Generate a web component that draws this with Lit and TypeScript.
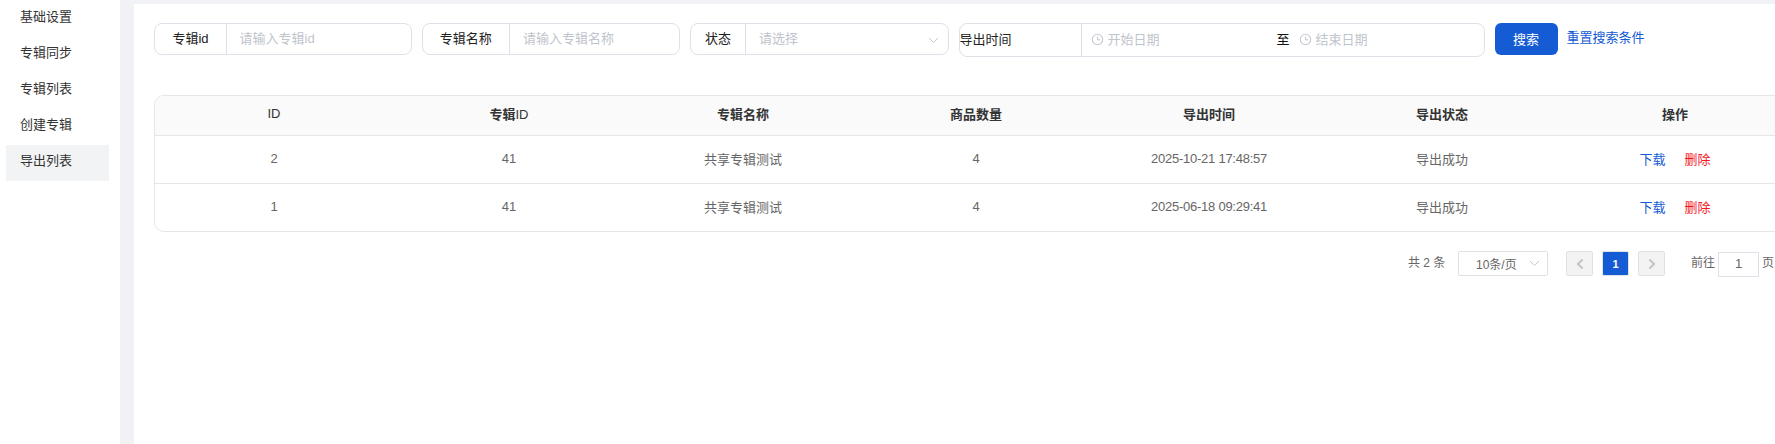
import { LitElement, html, css, svg } from "lit";
import { customElement } from "lit/decorators.js";

const clock = svg`<svg class="clock" width="13" height="13" viewBox="0 0 13 13" fill="none" stroke="#c8cbd6" stroke-width="1.1"><circle cx="6.5" cy="6.5" r="5.2"/><path d="M6.5 3.4V6.8H9.3"/></svg>`;
const chevDown = svg`<svg width="11" height="7" viewBox="0 0 11 7" fill="none" stroke="#c6c9d0" stroke-width="1"><path d="M1 1l4.5 4.5L10 1"/></svg>`;
const chevLeft = svg`<svg width="8" height="12" viewBox="0 0 8 12" fill="none" stroke="#c0c4cc" stroke-width="2"><path d="M6.5 1.5L2 6l4.5 4.5"/></svg>`;
const chevRight = svg`<svg width="8" height="12" viewBox="0 0 8 12" fill="none" stroke="#c0c4cc" stroke-width="2"><path d="M1.5 1.5L6 6l-4.5 4.5"/></svg>`;

const menu = ["基础设置", "专辑同步", "专辑列表", "创建专辑", "导出列表"];
const rows = [
  { id: "2", aid: "41", name: "共享专辑测试", n: "4", t: "2025-10-21 17:48:57", s: "导出成功" },
  { id: "1", aid: "41", name: "共享专辑测试", n: "4", t: "2025-06-18 09:29:41", s: "导出成功" },
];

@customElement("app-root")
export class AppRoot extends LitElement {
  static styles = css`
    :host {
      display: flex;
      width: 1775px;
      height: 444px;
      overflow: hidden;
      background: #f0f2f5;
      font-family: "Liberation Sans", "Noto Sans CJK SC", sans-serif;
      font-size: 13px;
      color: #333;
    }
    .side {
      flex: none;
      width: 120px;
      background: #fff;
      padding: 1px 11px 0 6px;
      box-sizing: border-box;
    }
    .item {
      height: 36px;
      line-height: 32px;
      padding-left: 14px;
    }
    .item.on { background: #f2f3f5; }
    .main {
      flex: none;
      width: 1641px;
      margin: 4px 0 0 14px;
      padding: 19px 0 0 20px;
      box-sizing: border-box;
      background: #fff;
    }
    .search {
      display: flex;
      align-items: flex-start;
      gap: 10px;
      height: 33.5px;
    }
    .box {
      display: flex;
      height: 32px;
      box-sizing: border-box;
      border: 1px solid #e0e1e8;
      border-radius: 8px;
      align-items: center;
      flex: none;
    }
    .b1 { width: 258px; }
    .b2 { width: 258px; }
    .b3 { width: 258.5px; }
    .b4 { width: 526px; height: 33.5px; }
    .lab {
      flex: none;
      height: 100%;
      display: flex;
      align-items: center;
      justify-content: center;
      border-right: 1px solid #e0e1e8;
      color: #222;
      box-sizing: border-box;
      padding-bottom: 3px;
    }
    .b1 .lab { width: 72px; }
    .b2 .lab { width: 86.5px; }
    .b3 .lab { width: 55px; }
    .b4 .lab { width: 122px; justify-content: flex-start; padding-bottom: 2px; }
    .ph { color: #c0c4cc; }
    .b1 .ph { padding: 0 0 3px 12.5px; }
    .b2 .ph { padding: 0 0 3px 13.5px; }
    .b3 .ph { padding: 0 0 3px 13px; }
    .b3 .sel { flex: 1; display: flex; align-items: center; justify-content: space-between; padding-right: 9px; }
    .b3 svg { margin-top: 3px; }
    .date { display: flex; align-items: center; gap: 4px; }
    .clock { flex: none; }
    .d1 { margin-left: 9px; width: 186px; }
    .to { color: #111; width: 22px; padding-bottom: 2px; }
    .date .ph { padding-bottom: 2px; }
    .btn {
      flex: none;
      width: 63px;
      height: 32px;
      border-radius: 6px;
      background: #155bd4;
      color: #fff;
      display: flex;
      align-items: center;
      justify-content: center;
      padding-bottom: 2px;
      box-sizing: border-box;
    }
    .link {
      color: #155bd4;
      line-height: 30px;
      flex: none;
      margin-left: -1px;
    }
    .table {
      width: 1650px;
      margin-top: 38.5px;
      border: 1px solid #e5e6ea;
      border-radius: 10px;
      box-sizing: border-box;
      overflow: hidden;
    }
    .tr {
      display: grid;
      grid-template-columns: 238px 232px 236px 230px 236px 230px 236px 1fr;
      align-items: center;
      text-align: center;
      height: 45px;
      padding-bottom: 2px;
      color: #666;
      border-top: 1px solid #e5e6ea;
      box-sizing: content-box;
    }
    .tr.head {
      height: 35px;
      padding-bottom: 4px;
      border-top: 0;
      background: #fafafa;
      color: #333;
      font-weight: 600;
    }
    .tr.head .lat { font-weight: 400; }
    .time { letter-spacing: -0.24px; }
    .ops { display: flex; justify-content: center; gap: 19px; }
    .dl { color: #155bd4; }
    .del { color: #f5141e; }
    .pager {
      display: flex;
      align-items: flex-start;
      margin: 19px 0 0 1254px;
      font-size: 12px;
      color: #666;
      white-space: nowrap;
    }
    .total { width: 50px; line-height: 25px; flex: none; }
    .size {
      flex: none;
      width: 90px;
      height: 25px;
      box-sizing: border-box;
      border: 1px solid #e0e1e8;
      border-radius: 2px;
      display: flex;
      align-items: center;
      padding: 0 7px 0 17px;
      justify-content: space-between;
    }
    .pg {
      flex: none;
      width: 27px;
      height: 25px;
      box-sizing: border-box;
      border: 1px solid #e0e1e8;
      border-radius: 2px;
      background: #f3f3f4;
      display: flex;
      align-items: center;
      justify-content: center;
      margin-left: 9px;
    }
    .pg.first { margin-left: 18px; }
    .pg.on {
      background: #155bd4;
      color: #fff;
      font-weight: 700;
      font-size: 11px;
    }
    .goto { line-height: 25px; margin-left: 26px; flex: none; }
    .num {
      flex: none;
      width: 41px;
      height: 25px;
      box-sizing: border-box;
      border: 1px solid #e0e1e8;
      margin: 1px 3px 0 3px;
      text-align: center;
      font-size: 13px;
      line-height: 21px;
    }
    .unit { line-height: 25px; flex: none; }
  `;

  render() {
    return html`
      <nav class="side">
        ${menu.map((m, i) => html`<div class="item ${i === 4 ? "on" : ""}">${m}</div>`)}
      </nav>
      <main class="main">
        <div class="search">
          <div class="box b1"><span class="lab">专辑id</span><span class="ph">请输入专辑id</span></div>
          <div class="box b2"><span class="lab">专辑名称</span><span class="ph">请输入专辑名称</span></div>
          <div class="box b3"><span class="lab">状态</span><span class="sel"><span class="ph">请选择</span>${chevDown}</span></div>
          <div class="box b4">
            <span class="lab">导出时间</span>
            <span class="date d1">${clock}<span class="ph">开始日期</span></span>
            <span class="to">至</span>
            <span class="date">${clock}<span class="ph">结束日期</span></span>
          </div>
          <div class="btn">搜索</div>
          <span class="link">重置搜索条件</span>
        </div>
        <div class="table">
          <div class="tr head">
            <span class="lat">ID</span><span>专辑<span class="lat">ID</span></span><span>专辑名称</span><span>商品数量</span><span>导出时间</span><span>导出状态</span><span>操作</span>
          </div>
          ${rows.map(
            (r) => html`<div class="tr">
              <span>${r.id}</span><span>${r.aid}</span><span>${r.name}</span><span>${r.n}</span><span class="time">${r.t}</span><span>${r.s}</span>
              <span class="ops"><span class="dl">下载</span><span class="del">删除</span></span>
            </div>`
          )}
        </div>
        <div class="pager">
          <span class="total">共 2 条</span>
          <div class="size"><span>10条/页</span>${chevDown}</div>
          <div class="pg first">${chevLeft}</div>
          <div class="pg on">1</div>
          <div class="pg">${chevRight}</div>
          <span class="goto">前往</span>
          <div class="num">1</div>
          <span class="unit">页</span>
        </div>
      </main>
    `;
  }
}
